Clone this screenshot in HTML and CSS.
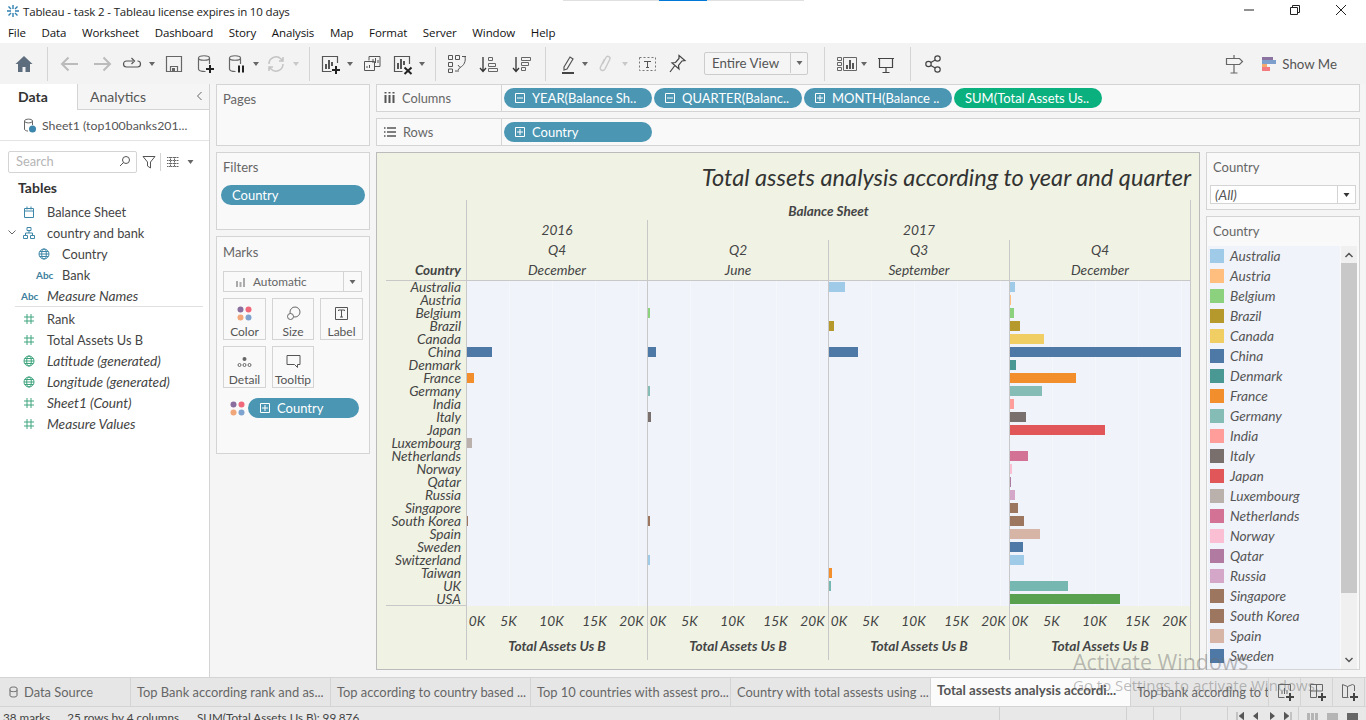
FILE: index.html
```html
<!DOCTYPE html>
<html lang="en">
<head>
  <meta charset="UTF-8" />
  <title>Tableau - task 2 - Tableau license expires in 10 days</title>
  <link rel="stylesheet" href="styles.css">
</head>
<body>
  <svg class="defs" width="0" height="0">
    <symbol id="plusbox" viewBox="0 0 10 10"><path d="M.5.5h9v9h-9zM2 5h6M5 2v6" fill="none" stroke="#fff"/></symbol>
    <symbol id="minusbox" viewBox="0 0 10 10"><path d="M.5.5h9v9h-9zM2 5h6" fill="none" stroke="#fff"/></symbol>
    <symbol id="globe" viewBox="0 0 12 12"><g fill="none" stroke="currentColor"><circle cx="6" cy="6" r="5"/><ellipse cx="6" cy="6" rx="2.3" ry="5"/><path d="M1 6h10M1.8 3.5h8.4M1.8 8.500h8.400"/></g></symbol>
    <symbol id="hash" viewBox="0 0 12 12"><path d="M4 1v10M8 1v10M1 4h10M1 8h10" fill="none" stroke="#3fa47e"/></symbol>
    <symbol id="dots" viewBox="0 0 15 15"><circle cx="3.500" cy="3.500" r="3" fill="#8a6f9e"/><circle cx="11.500" cy="3.500" r="3" fill="#f0697a"/><circle cx="3.500" cy="11.500" r="3" fill="#f2a77b"/><circle cx="11.500" cy="11.500" r="3" fill="#7fa3cf"/></symbol>
    <symbol id="drop" viewBox="0 0 6 4"><path d="M0 0h6L3 4z" fill="currentColor"/></symbol>
  </svg>

  <div class="app">
    <header class="titlebar">
      <svg class="logo" width="12" height="12" viewBox="0 0 12 12"><path d="M6 0v4M6 8v4M0 6h4M8 6h4M1.500 1.500l2.500 2.500M8 8l2.500 2.500M10.500 1.500L8 4M4 8l-2.500 2.500" stroke="#2f7fb0" stroke-width="1.400" fill="none"/></svg>
      <span class="app-title">Tableau - task 2 - Tableau license expires in 10 days</span>
      <div class="loadline"><span class="loadline-on"></span></div>
      <div class="winctl">
        <svg width="12" height="12" viewBox="0 0 12 12"><path d="M1 6h10" stroke="#222"/></svg>
        <svg width="12" height="12" viewBox="0 0 12 12"><path d="M1.500 3.500h7v7h-7zM3.500 3.500v-2h7v7h-2" fill="none" stroke="#222"/></svg>
        <svg width="12" height="12" viewBox="0 0 12 12"><path d="M1 1l10 10M11 1L1 11" stroke="#222"/></svg>
      </div>
    </header>

    <nav class="menubar">
      <span>File</span><span>Data</span><span>Worksheet</span><span>Dashboard</span><span>Story</span><span>Analysis</span><span>Map</span><span>Format</span><span>Server</span><span>Window</span><span>Help</span>
    </nav>

    <div class="toolbar">
      <svg class="tool g12" viewBox="0 0 24 24"><path d="M12 4L3.500 12H6v8h4.500v-5h3v5H18v-8h2.500z" fill="#5d6d7e"/></svg>
      <i class="tsep g11"></i>
      <svg class="tool g10" viewBox="0 0 24 24"><path d="M20 12H4M10.500 5.500L4 12l6.500 6.500" fill="none" stroke="#bbb" stroke-width="2"/></svg>
      <svg class="tool g8" viewBox="0 0 24 24"><path d="M4 12h16M13.500 5.500L20 12l-6.500 6.500" fill="none" stroke="#bbb" stroke-width="2"/></svg>
      <svg class="tool g6" viewBox="0 0 24 24"><path d="M13 9H6.500a3 3 0 0 0 0 6h11a3 3 0 0 0 0-6M11.500 6l3 3-3 3" fill="none" stroke="#555" stroke-width="1.200"/></svg>
      <svg class="tdrop g5"><use href="#drop"/></svg>
      <svg class="tool g7" viewBox="0 0 24 24"><path d="M4.500 4.500h15v15h-15zM8.500 19.500v-5h7v5" fill="none" stroke="#666" stroke-width="1.200"/><path d="M10 16h3v3h-3z" fill="#666"/></svg>
      <svg class="tool g7" viewBox="0 0 24 24"><path d="M5.500 6c0-3 11-3 11 0M5.500 6c0 3 11 3 11 0v6M5.500 6v11c0 1.500 3 2.500 7 2.500" fill="none" stroke="#666" stroke-width="1.200"/><path d="M17 13v8M13 17h8" stroke="#222" stroke-width="2"/></svg>
      <svg class="tool g7" viewBox="0 0 24 24"><path d="M5.500 6c0-3 11-3 11 0M5.500 6c0 3 11 3 11 0v6M5.500 6v11c0 1.500 3 2.500 6 2.500" fill="none" stroke="#666" stroke-width="1.200"/><path d="M15 13.500v7M19 13.500v7" stroke="#222" stroke-width="2"/></svg>
      <svg class="tdrop g5"><use href="#drop"/></svg>
      <svg class="tool g5" viewBox="0 0 24 24"><path d="M5 12a7 7 0 0 1 12-5l2 2M19 12a7 7 0 0 1-12 5l-2-2M19 5v4h-4M5 19v-4h4" fill="none" stroke="#c4c4c4" stroke-width="1.500"/></svg>
      <svg class="tdrop g5 off"><use href="#drop"/></svg>
      <i class="tsep g10"></i>
      <svg class="tool g8" viewBox="0 0 24 24"><path d="M19.500 11V4.500h-15v15h9" fill="none" stroke="#555" stroke-width="1.200"/><path d="M8 12v5M11 8v9M14 10v4" stroke="#555" stroke-width="2"/><path d="M18 14v8M14 18h8" stroke="#222" stroke-width="2"/></svg>
      <svg class="tdrop g5"><use href="#drop"/></svg>
      <svg class="tool g7" viewBox="0 0 24 24"><path d="M9 8.500V4.500h11v10h-5" fill="none" stroke="#555"/><path d="M4.500 9.500h10v9h-10z" fill="#f3f3f3" stroke="#555"/><path d="M13 11V7M15.500 11V6M18 11V8M7 16v-2M9.500 16v-3" stroke="#555"/></svg>
      <svg class="tool g6" viewBox="0 0 24 24"><path d="M19.500 12V4.500h-15v15h8" fill="none" stroke="#555" stroke-width="1.200"/><path d="M8 11v6M11 7v10M14 9v4" stroke="#555" stroke-width="2"/><path d="M14.500 15.500l7 6.500M21.500 15.500l-7 6.500" stroke="#222" stroke-width="2"/></svg>
      <svg class="tdrop g5"><use href="#drop"/></svg>
      <i class="tsep g10"></i>
      <svg class="tool g9" viewBox="0 0 24 24"><path d="M3.500 3.500h4v4h-4zM10.500 3.500h4v4h-4zM3.500 10.500h4v4h-4zM3.500 17h4v3.500h-4zM17 4.500h4M20 4.500c1 5-1 9-5 11M13 13l2 2.500-2 2.500M10 19h4" fill="none" stroke="#555"/></svg>
      <svg class="tool g8" viewBox="0 0 24 24"><path d="M6 5v14M3 16l3 3.500L9 16" fill="none" stroke="#333" stroke-width="1.300"/><path d="M11.500 5.500h4v3h-4zM11.500 11.500h7v3h-7zM11.500 16.500h9v3h-9z" fill="none" stroke="#666"/></svg>
      <svg class="tool g9" viewBox="0 0 24 24"><path d="M6 5v14M3 16l3 3.500L9 16" fill="none" stroke="#333" stroke-width="1.300"/><path d="M11.500 5.500h9v3h-9zM11.500 10.500h7v3h-7zM11.500 15.500h4v3h-4z" fill="none" stroke="#666"/></svg>
      <i class="tsep g11"></i>
      <svg class="tool g10" viewBox="0 0 24 24"><path d="M8 15l6-10 3 2-6 10-3 1z" fill="none" stroke="#555" stroke-width="1.200"/><path d="M6 21h12" stroke="#444" stroke-width="2"/></svg>
      <svg class="tdrop g2"><use href="#drop"/></svg>
      <svg class="tool g5" viewBox="0 0 24 24"><path d="M9.500 12l3.500-6.500c1.300-2.400 5-.5 3.700 2L12 17c-1.600 3-6 1-4.500-2l4-8" fill="none" stroke="#c8c8c8" stroke-width="1.400"/></svg>
      <svg class="tdrop g5 off"><use href="#drop"/></svg>
      <svg class="tool g7" viewBox="0 0 24 24"><path d="M4.500 5.500h16v13h-16z" fill="none" stroke="#777" stroke-dasharray="2 2"/><path d="M9 9.500h7M12.500 9.500v6M11 15.500h3" fill="none" stroke="#555"/></svg>
      <svg class="tool g6" viewBox="0 0 24 24"><path d="M14 3.500l6 5-3 .5-3.500 4.500.5 3.500-7-6 3.500-.5 3.500-4zM9.500 14L5 20" fill="none" stroke="#444" stroke-width="1.200"/></svg>
      <div class="fitbox g15"><span class="fit-text">Entire View</span><span class="fit-arrow"><svg width="7" height="4"><use href="#drop"/></svg></span></div>
      <i class="tsep g16"></i>
      <svg class="tool g10" viewBox="0 0 24 24"><path d="M2.500 5.500h4v3h-4zM2.500 10.500h4v3h-4zM2.500 15.500h4v3h-4zM8.500 5.500h13v13h-13z" fill="none" stroke="#666"/><path d="M12 17v-4M15 17V8M18 17v-6" stroke="#555" stroke-width="2"/></svg>
      <svg class="tdrop g2"><use href="#drop"/></svg>
      <svg class="tool g7" viewBox="0 0 24 24"><path d="M4 6.500h16M5.500 6.500v9h13v-9M12 15.500v5M8.500 20.500h7" fill="none" stroke="#444" stroke-width="1.200"/></svg>
      <i class="tsep g12"></i>
      <svg class="tool g10" viewBox="0 0 24 24"><g fill="none" stroke="#444" stroke-width="1.200"><circle cx="16.500" cy="6.500" r="2.700"/><circle cx="16.500" cy="17.500" r="2.700"/><circle cx="7.500" cy="12" r="2.700"/><path d="M9.900 10.600l4.300-2.700M9.900 13.400l4.300 2.700"/></g></svg>
      <svg class="tool signpost" viewBox="0 0 24 24"><path d="M12 3v3M4.500 6.500h13l3 3-3 3h-13zM12 12.500V21M8.500 21h7" fill="none" stroke="#666" stroke-width="1.200"/></svg>
      <div class="showme">
        <span class="sm-bars"><i class="sm1"></i><i class="sm2"></i><i class="sm3"></i><i class="sm4"></i></span>
        <span>Show Me</span>
      </div>
    </div>

    <main class="main">
      <aside class="datapane">
        <div class="dtabs">
          <div class="dtab dtab-on">Data</div>
          <div class="dtab">Analytics<svg class="dchev" width="8" height="10" viewBox="0 0 8 10"><path d="M6.500 1l-4 4 4 4" fill="none" stroke="#666"/></svg></div>
        </div>
        <div class="dsource">
          <svg width="14" height="15" viewBox="0 0 14 15"><path d="M1.500 3c0-2.500 8-2.500 8 0M1.500 3c0 2.500 8 2.500 8 0v4M1.500 3v8c0 1.300 1.500 2 3.500 2" fill="none" stroke="#666"/><circle cx="9.500" cy="11" r="3.500" fill="#3c85ad"/></svg>
          <span>Sheet1 (top100banks201...</span>
        </div>
        <div class="searchrow">
          <div class="searchbox"><span>Search</span><svg width="12" height="12" viewBox="0 0 12 12"><circle cx="7" cy="5" r="3.500" fill="none" stroke="#555"/><path d="M4.500 7.500L1 11" stroke="#555"/></svg></div>
          <svg class="filter-ic" width="14" height="14" viewBox="0 0 14 14"><path d="M1 1.500h12L8.500 7v6l-3-2V7z" fill="none" stroke="#555"/></svg>
          <i class="search-sep"></i>
          <svg class="list-ic" width="12" height="10" viewBox="0 0 12 10"><path d="M0 .5h12M0 3.500h12M0 6.500h12M0 9.500h12M3.500 0v10M7.500 0v10" stroke="#666" stroke-dasharray="1.500 .5"/></svg>
          <svg class="list-drop" width="7" height="4"><use href="#drop"/></svg>
        </div>
        <h3 class="tables">Tables</h3>
        <ul class="fields">
          <li><svg class="ficon" width="12" height="12" viewBox="0 0 12 12"><path d="M1.500 2.500h9v9h-9zM1.500 5h9M4 .5v3M8 .5v3" fill="none" stroke="#3e87a8"/></svg>Balance Sheet</li>
          <li><svg class="fexp" width="8" height="5" viewBox="0 0 8 5"><path d="M.5.500L4 4 7.500.500" fill="none" stroke="#666"/></svg><svg class="ficon" width="12" height="12" viewBox="0 0 12 12"><path d="M4 .5h4v3H4zM.5 8.500h4v3h-4zM7.500 8.500h4v3h-4zM6 3.500V6M2.500 8.500V6h7v2.500" fill="none" stroke="#3e87a8"/></svg>country and bank</li>
          <li class="child"><svg class="ficon blue" width="12" height="12"><use href="#globe"/></svg>Country</li>
          <li class="child"><span class="abc">Abc</span>Bank</li>
          <li class="it"><span class="abc">Abc</span>Measure Names</li>
          <li class="rule"></li>
          <li><svg class="ficon" width="12" height="12"><use href="#hash"/></svg>Rank</li>
          <li><svg class="ficon" width="12" height="12"><use href="#hash"/></svg>Total Assets Us B</li>
          <li class="it"><svg class="ficon green" width="12" height="12"><use href="#globe"/></svg>Latitude (generated)</li>
          <li class="it"><svg class="ficon green" width="12" height="12"><use href="#globe"/></svg>Longitude (generated)</li>
          <li class="it"><svg class="ficon" width="12" height="12"><use href="#hash"/></svg>Sheet1 (Count)</li>
          <li class="it"><svg class="ficon" width="12" height="12"><use href="#hash"/></svg>Measure Values</li>
        </ul>
      </aside>

      <section class="cards">
        <div class="card pages"><div class="card-title">Pages</div></div>
        <div class="card filters">
          <div class="card-title">Filters</div>
          <div class="pill pill-plain">Country</div>
        </div>
        <div class="card marks">
          <div class="card-title">Marks</div>
          <div class="marktype">
            <svg width="10" height="10" viewBox="0 0 10 10"><path d="M1 4v6M4.500 5v5M8 1v9" stroke="#aaa" stroke-width="2"/></svg>
            <span>Automatic</span>
            <i class="marktype-arrow"><svg width="7" height="4"><use href="#drop"/></svg></i>
          </div>
          <div class="markgrid">
            <div class="markbtn"><svg width="15" height="15"><use href="#dots"/></svg><span>Color</span></div>
            <div class="markbtn"><svg width="15" height="15" viewBox="0 0 15 15"><circle cx="9" cy="6" r="5" fill="none" stroke="#666"/><circle cx="4.500" cy="10.500" r="3" fill="#f9f9f9" stroke="#666"/></svg><span>Size</span></div>
            <div class="markbtn"><svg width="15" height="15" viewBox="0 0 15 15"><path d="M1.500 1.500h12v12h-12zM4.500 5V4h6v1M7.500 4v7M6 11h3" fill="none" stroke="#555"/></svg><span>Label</span></div>
            <div class="markbtn"><svg width="15" height="15" viewBox="0 0 15 15"><circle cx="7.500" cy="5" r="2" fill="#666"/><g fill="none" stroke="#666"><circle cx="2.500" cy="11" r="1.500"/><circle cx="7.500" cy="11" r="1.500"/><circle cx="12.500" cy="11" r="1.500"/></g></svg><span>Detail</span></div>
            <div class="markbtn"><svg width="15" height="15" viewBox="0 0 15 15"><path d="M1 1.500h13v9h-2.500v3l-3-3H1z" fill="none" stroke="#555"/></svg><span>Tooltip</span></div>
          </div>
          <div class="markpill">
            <svg width="15" height="15"><use href="#dots"/></svg>
            <div class="pill pill-mark"><svg width="10" height="10"><use href="#plusbox"/></svg>Country</div>
          </div>
        </div>
      </section>

      <section class="workspace">
        <div class="shelf">
          <div class="shelf-label"><svg width="11" height="11" viewBox="0 0 11 11"><path d="M1.500 3v8M5.500 3v8M9.500 3v8M1.500 0v1.500M5.500 0v1.500M9.500 0v1.500" stroke="#555" stroke-width="2"/></svg>Columns</div>
          <div class="shelf-pills">
            <div class="pill pill-field"><svg width="10" height="10"><use href="#minusbox"/></svg>YEAR(Balance Sh..</div>
            <div class="pill pill-field"><svg width="10" height="10"><use href="#minusbox"/></svg>QUARTER(Balanc..</div>
            <div class="pill pill-field"><svg width="10" height="10"><use href="#plusbox"/></svg>MONTH(Balance ..</div>
            <div class="pill pill-field pill-green">SUM(Total Assets Us..</div>
          </div>
        </div>
        <div class="shelf">
          <div class="shelf-label"><svg width="12" height="10" viewBox="0 0 12 10"><path d="M3 1h9M3 5h9M3 9h9M0 1h1.500M0 5h1.500M0 9h1.500" stroke="#555" stroke-width="1.600"/></svg>Rows</div>
          <div class="shelf-pills">
            <div class="pill pill-field"><svg width="10" height="10"><use href="#plusbox"/></svg>Country</div>
          </div>
        </div>

        <div class="stage">
          <div class="viz">
            <div class="viz-title">Total assets analysis according to year and quarter</div>
            <div class="chart">
              <div class="chead">
                <div class="ch ch-bold ch-line ch-balance">Balance Sheet</div>
                <div class="ch ch-line ch-2016">2016</div>
                <div class="ch ch-line ch-2017">2017</div>
                <div class="ch ch-line ch-q1">Q4</div>
                <div class="ch ch-line">Q2</div>
                <div class="ch ch-line">Q3</div>
                <div class="ch ch-line">Q4</div>
                <div class="ch ch-bold ch-country">Country</div>
                <div class="ch ch-line">December</div>
                <div class="ch ch-line">June</div>
                <div class="ch ch-line">September</div>
                <div class="ch ch-line">December</div>
              </div>

              <div class="cbody">
                <div class="rowlabels">
                  <span>Australia</span><span>Austria</span><span>Belgium</span><span>Brazil</span><span>Canada</span><span>China</span><span>Denmark</span><span>France</span><span>Germany</span><span>India</span><span>Italy</span><span>Japan</span><span>Luxembourg</span><span>Netherlands</span><span>Norway</span><span>Qatar</span><span>Russia</span><span>Singapore</span><span>South Korea</span><span>Spain</span><span>Sweden</span><span>Switzerland</span><span>Taiwan</span><span>UK</span><span>USA</span>
                </div>
                <div class="pane">
                  <i class="bar c-china" style="grid-row:6;width:25px"></i>
                  <i class="bar c-france" style="grid-row:8;width:7px"></i>
                  <i class="bar c-lux" style="grid-row:13;width:5px"></i>
                  <i class="bar c-brown" style="grid-row:19;width:1px"></i>
                </div>
                <div class="pane">
                  <i class="bar c-belgium" style="grid-row:3;width:2px"></i>
                  <i class="bar c-china" style="grid-row:6;width:8px"></i>
                  <i class="bar c-germany" style="grid-row:9;width:2px"></i>
                  <i class="bar c-italy" style="grid-row:11;width:3px"></i>
                  <i class="bar c-brown" style="grid-row:19;width:2px"></i>
                  <i class="bar c-sky" style="grid-row:22;width:2px"></i>
                </div>
                <div class="pane">
                  <i class="bar c-sky" style="grid-row:1;width:16px"></i>
                  <i class="bar c-brazil" style="grid-row:4;width:5px"></i>
                  <i class="bar c-china" style="grid-row:6;width:29px"></i>
                  <i class="bar c-france" style="grid-row:23;width:3px"></i>
                  <i class="bar c-uk" style="grid-row:24;width:2px"></i>
                </div>
                <div class="pane">
                  <i class="bar c-sky" style="grid-row:1;width:5px"></i>
                  <i class="bar c-austria" style="grid-row:2;width:1px"></i>
                  <i class="bar c-belgium" style="grid-row:3;width:4px"></i>
                  <i class="bar c-brazil" style="grid-row:4;width:10px"></i>
                  <i class="bar c-canada" style="grid-row:5;width:34px"></i>
                  <i class="bar c-china" style="grid-row:6;width:171px"></i>
                  <i class="bar c-denmark" style="grid-row:7;width:6px"></i>
                  <i class="bar c-france" style="grid-row:8;width:66px"></i>
                  <i class="bar c-germany" style="grid-row:9;width:32px"></i>
                  <i class="bar c-india" style="grid-row:10;width:4px"></i>
                  <i class="bar c-italy" style="grid-row:11;width:16px"></i>
                  <i class="bar c-japan" style="grid-row:12;width:95px"></i>
                  <i class="bar c-nether" style="grid-row:14;width:18px"></i>
                  <i class="bar c-norway" style="grid-row:15;width:2px"></i>
                  <i class="bar c-qatar" style="grid-row:16;width:1px"></i>
                  <i class="bar c-russia" style="grid-row:17;width:5px"></i>
                  <i class="bar c-brown" style="grid-row:18;width:8px"></i>
                  <i class="bar c-brown" style="grid-row:19;width:14px"></i>
                  <i class="bar c-spain" style="grid-row:20;width:30px"></i>
                  <i class="bar c-china" style="grid-row:21;width:13px"></i>
                  <i class="bar c-sky" style="grid-row:22;width:14px"></i>
                  <i class="bar c-uk" style="grid-row:24;width:58px"></i>
                  <i class="bar c-usa" style="grid-row:25;width:110px"></i>
                </div>
              </div>

              <div class="cfoot">
                <div class="axis-blank"></div>
                <div class="axis"><div class="ticks"><span>0K</span><span>5K</span><span>10K</span><span>15K</span><span>20K</span></div><b>Total Assets Us B</b></div>
                <div class="axis"><div class="ticks"><span>0K</span><span>5K</span><span>10K</span><span>15K</span><span>20K</span></div><b>Total Assets Us B</b></div>
                <div class="axis"><div class="ticks"><span>0K</span><span>5K</span><span>10K</span><span>15K</span><span>20K</span></div><b>Total Assets Us B</b></div>
                <div class="axis"><div class="ticks"><span>0K</span><span>5K</span><span>10K</span><span>15K</span><span>20K</span></div><b>Total Assets Us B</b></div>
              </div>
            </div>
          </div>

          <div class="sidecards">
            <div class="card qfilter">
              <div class="card-title">Country</div>
              <div class="qselect"><span>(All)</span><i><svg width="7" height="4"><use href="#drop"/></svg></i></div>
            </div>
            <div class="card legend">
              <div class="card-title">Country</div>
              <div class="legend-body">
                <ul class="legend-list">
                  <li><i class="c-sky"></i>Australia</li>
                  <li><i class="c-austria"></i>Austria</li>
                  <li><i class="c-belgium"></i>Belgium</li>
                  <li><i class="c-brazil"></i>Brazil</li>
                  <li><i class="c-canada"></i>Canada</li>
                  <li><i class="c-china"></i>China</li>
                  <li><i class="c-denmark"></i>Denmark</li>
                  <li><i class="c-france"></i>France</li>
                  <li><i class="c-germany"></i>Germany</li>
                  <li><i class="c-india"></i>India</li>
                  <li><i class="c-italy"></i>Italy</li>
                  <li><i class="c-japan"></i>Japan</li>
                  <li><i class="c-lux"></i>Luxembourg</li>
                  <li><i class="c-nether"></i>Netherlands</li>
                  <li><i class="c-norway"></i>Norway</li>
                  <li><i class="c-qatar"></i>Qatar</li>
                  <li><i class="c-russia"></i>Russia</li>
                  <li><i class="c-brown"></i>Singapore</li>
                  <li><i class="c-brown"></i>South Korea</li>
                  <li><i class="c-spain"></i>Spain</li>
                  <li><i class="c-china"></i>Sweden</li>
                </ul>
                <div class="scrollbar">
                  <svg width="10" height="6" viewBox="0 0 10 6"><path d="M1.500 5L5 1.500 8.500 5" fill="none" stroke="#555" stroke-width="1.500"/></svg>
                  <div class="thumb"></div>
                  <svg class="scroll-down" width="10" height="6" viewBox="0 0 10 6"><path d="M1.500 1L5 4.500 8.500 1" fill="none" stroke="#555" stroke-width="1.500"/></svg>
                </div>
              </div>
            </div>
          </div>
        </div>
      </section>
    </main>

    <div class="tabs">
      <div class="tab tab-source"><svg width="9" height="12" viewBox="0 0 9 12"><path d="M1 2.500c0-2 7-2 7 0v7c0 2-7 2-7 0zM1 4.500c0 1.500 7 1.500 7 0" fill="none" stroke="#666"/></svg>Data Source</div>
      <div class="tab">Top Bank according rank and as...</div>
      <div class="tab">Top according to country based ...</div>
      <div class="tab">Top 10 countries with assest pro...</div>
      <div class="tab">Country with total assests using ...</div>
      <div class="tab tab-on">Total assests analysis accordi...</div>
      <div class="tab tab-cut">Top bank according to to</div>
      <div class="tab-btn"><svg width="20" height="20" viewBox="0 0 20 20"><path d="M15.500 9V2.500h-12v13h6" fill="none" stroke="#666"/><path d="M7 12V9M9.500 12V6M12 12V8" stroke="#666"/><path d="M15 11v8M11 15h8" stroke="#444" stroke-width="2"/></svg></div>
      <div class="tab-btn"><svg width="20" height="20" viewBox="0 0 20 20"><path d="M15.500 9V2.500h-12v13h6M3.500 9h12M9.500 2.500v13" fill="none" stroke="#666"/><path d="M15 11v8M11 15h8" stroke="#444" stroke-width="2"/></svg></div>
      <div class="tab-btn"><svg width="20" height="20" viewBox="0 0 20 20"><path d="M3.500 2.500l5 2 5-2 2 1V9M8.500 4.500v11M3.500 2.500v13l5 0h1" fill="none" stroke="#666"/><path d="M15 11v8M11 15h8" stroke="#444" stroke-width="2"/></svg></div>
    </div>

    <footer class="status">
      <span class="st st-marks">38 marks</span>
      <span class="st st-rows">25 rows by 4 columns</span>
      <span class="st st-sum">SUM(Total Assets Us B): 99,876</span>
      <i class="st-line st-l1"></i><i class="st-line st-l2"></i><i class="st-line st-l3"></i><i class="st-line st-l4"></i><i class="st-line st-l5"></i>
      <div class="st-nav">
        <svg width="8" height="8" viewBox="0 0 8 8"><path d="M1 0v8M8 0L3 4l5 4z" fill="#555" stroke="#555" stroke-width=".5"/></svg>
        <svg width="8" height="8" viewBox="0 0 8 8"><path d="M6 0L1 4l5 4z" fill="#555"/></svg>
        <svg width="8" height="8" viewBox="0 0 8 8"><path d="M2 0l5 4-5 4z" fill="#555"/></svg>
        <svg width="8" height="8" viewBox="0 0 8 8"><path d="M7 0v8M0 0l5 4-5 4z" fill="#555" stroke="#555" stroke-width=".5"/></svg>
      </div>
      <div class="st-views">
        <span class="v-grid"></span><span class="v-mid"></span><span class="v-big"></span>
      </div>
    </footer>
  </div>

  <div class="watermark">
    <div class="wm-big">Activate Windows</div>
    <div class="wm-small">Go to Settings to activate Windows.</div>
  </div>
</body>
</html>
```

FILE: styles.css
```css
* {
  box-sizing: border-box;
}
html, body {
  margin: 0;
  height: 720px;
  overflow: hidden;
}
body {
  font-family: "Lato", "Open Sans", sans-serif;
  font-size: 12.8px;
  color: #444;
  background: #fff;
  position: relative;
}
ul {
  list-style: none;
  margin: 0;
  padding: 0;
}
.defs {
  position: absolute;
}
.app {
  width: 1366px;
  height: 720px;
  display: flex;
  flex-direction: column;
}

/* title and menu */
.titlebar {
  height: 22px;
  display: flex;
  align-items: center;
  padding-left: 7px;
  flex: none;
  position: relative;
  font-family: "Open Sans", sans-serif;
}
.logo {
  margin-right: 4px;
}
.app-title {
  font-size: 11.5px;
  color: #222;
  letter-spacing: -.15px;
}
.loadline {
  position: absolute;
  left: 563px;
  top: 0;
  width: 241px;
  height: 1px;
  background: #e0e0e0;
}
.loadline-on {
  display: block;
  margin-left: 96px;
  width: 48px;
  height: 1px;
  background: #0078d7;
}
.winctl {
  margin-left: auto;
  display: flex;
  gap: 34px;
  padding-right: 19px;
  margin-top: -2px;
}
.menubar {
  height: 21px;
  flex: none;
  display: flex;
  align-items: center;
  gap: 15.7px;
  padding-left: 8px;
  font-family: "Open Sans", sans-serif;
  font-size: 11.5px;
  letter-spacing: -.1px;
  color: #111;
}

/* toolbar */
.toolbar {
  height: 41px;
  flex: none;
  background: #f3f3f3;
  display: flex;
  align-items: center;
}
.tool {
  width: 24px;
  height: 24px;
  flex: none;
}
.tdrop {
  width: 6px;
  height: 4px;
  flex: none;
  color: #666;
}
.tdrop.off {
  color: #c8c8c8;
}
.tsep {
  width: 1px;
  height: 34px;
  background: #d4d4d4;
  flex: none;
}
.g2 { margin-left: 2px; }
.g5 { margin-left: 5px; }
.g6 { margin-left: 6px; }
.g7 { margin-left: 7px; }
.g8 { margin-left: 8px; }
.g9 { margin-left: 9px; }
.g10 { margin-left: 10px; }
.g11 { margin-left: 11px; }
.g12 { margin-left: 12px; }
.g15 { margin-left: 15px; }
.g16 { margin-left: 16px; }
.fitbox {
  width: 104px;
  height: 23px;
  border: 1px solid #ccc;
  border-radius: 2px;
  background: #f5f5f5;
  display: flex;
  align-items: center;
  font-size: 13.3px;
  color: #555;
  flex: none;
  padding-bottom: 1px;
}
.fit-text {
  padding-left: 7px;
  width: 85px;
}
.fit-arrow {
  flex: 1;
  height: 100%;
  border-left: 1px solid #ccc;
  display: flex;
  align-items: center;
  justify-content: center;
  color: #666;
}
.signpost {
  margin-left: auto;
}
.showme {
  display: flex;
  align-items: center;
  gap: 6px;
  margin-left: 16px;
  margin-right: 29px;
  font-size: 13.3px;
  color: #555;
}
.sm-bars {
  display: flex;
  flex-direction: column;
  width: 14px;
}
.sm-bars i {
  display: block;
  height: 3.500px;
}
.sm1 { width: 11px; background: #8a73a0; }
.sm2 { width: 14px; background: #7e9fcb; }
.sm3 { width: 5px; background: #f4a96e; }
.sm4 { width: 8px; background: #f57a80; }

/* main area */
.main {
  flex: 1;
  display: flex;
  background: #f5f5f5;
  min-height: 0;
}
.datapane {
  width: 210px;
  flex: none;
  background: #fff;
  border-right: 1px solid #d4d4d4;
}
.dtabs {
  display: flex;
  height: 26px;
  font-size: 14px;
}
.dtab {
  flex: 1;
  background: #f5f5f5;
  border-bottom: 1px solid #d4d4d4;
  border-left: 1px solid #d4d4d4;
  padding: 4px 0 0 12px;
  color: #555;
  position: relative;
}
.dtab-on {
  flex: none;
  width: 77px;
  background: #fff;
  border: 0;
  padding-left: 18px;
  font-weight: 700;
  color: #333;
}
.dchev {
  position: absolute;
  right: 6px;
  top: 7px;
}
.dsource {
  height: 31px;
  display: flex;
  align-items: center;
  gap: 5px;
  padding-left: 23px;
  border-bottom: 1px solid #e4e4e4;
  font-size: 12.3px;
  color: #555;
}
.searchrow {
  height: 32px;
  display: flex;
  align-items: center;
  padding: 9px 0 0 8px;
}
.searchbox {
  width: 129px;
  height: 22px;
  border: 1px solid #d4d4d4;
  border-radius: 2px;
  display: flex;
  align-items: center;
  justify-content: space-between;
  padding: 0 5px 1px 7px;
  color: #b5b5b5;
}
.filter-ic {
  margin-left: 5px;
}
.search-sep {
  width: 1px;
  height: 18px;
  background: #d4d4d4;
  margin-left: 4px;
}
.list-ic {
  margin-left: 6px;
}
.list-drop {
  margin-left: 8px;
  color: #666;
}
.tables {
  margin: 6px 0 0 18px;
  font-size: 14px;
  line-height: 18px;
  font-weight: 700;
  color: #333;
}
.fields {
  margin-top: 4px;
  color: #444;
}
.fields li {
  height: 21px;
  display: flex;
  align-items: center;
  position: relative;
  padding-left: 47px;
}
.fields li.it {
  font-style: italic;
  font-size: 13.7px;
}
.fields li.child {
  padding-left: 62px;
}
.fields li.rule {
  height: 1px;
  background: #e0e0e0;
  width: 188px;
  padding: 0;
  margin: 0 0 1px 15px;
}
.ficon {
  position: absolute;
  left: 23px;
  color: #3e87a8;
}
.fexp {
  position: absolute;
  left: 8px;
}
.child .ficon {
  left: 38px;
}
.ficon.green {
  color: #3fa47e;
}
.abc {
  position: absolute;
  left: 21px;
  font-size: 10px;
  font-weight: 700;
  font-style: normal;
  color: #3e7f9e;
}
.child .abc {
  left: 36px;
}

/* pages, filters, marks */
.cards {
  width: 154px;
  margin-left: 6px;
  flex: none;
  display: flex;
  flex-direction: column;
  gap: 6px;
}
.card {
  background: #f9f9f9;
  border: 1px solid #d4d4d4;
}
.card-title {
  padding: 6px 6px 0;
  line-height: 16px;
  font-size: 13px;
  color: #666;
}
.marks .card-title {
  padding-top: 7px;
}
.pages {
  height: 62px;
}
.filters {
  height: 78px;
}
.marks {
  height: 218px;
}
.pill {
  background: #4a96b3;
  color: #fff;
  height: 20px;
  border-radius: 10px;
  display: flex;
  align-items: center;
  font-size: 13px;
  padding-bottom: 1px;
  white-space: nowrap;
}
.pill svg {
  margin-right: 7px;
  flex: none;
}
.pill-plain {
  margin: 10px 4px 0 4px;
  padding-left: 11px;
}
.marktype {
  margin: 11px 7px 0 6px;
  height: 21px;
  border: 1px solid #d4d4d4;
  display: flex;
  align-items: center;
  padding-left: 12px;
  gap: 7px;
  font-size: 11.8px;
  color: #666;
  background: #f9f9f9;
}
.marktype-arrow {
  margin-left: auto;
  width: 18px;
  height: 100%;
  border-left: 1px solid #d4d4d4;
  display: flex;
  align-items: center;
  justify-content: center;
}
.markgrid {
  margin: 6px 0 0 6px;
  display: grid;
  grid-template-columns: 43px 42px 43px;
  grid-auto-rows: 42px;
  gap: 6px;
}
.markbtn {
  border: 1px solid #d4d4d4;
  display: flex;
  flex-direction: column;
  align-items: center;
  justify-content: flex-end;
  gap: 3px;
  font-size: 12px;
  color: #555;
}
.markpill {
  display: flex;
  align-items: center;
  margin: 10px 0 0 13px;
  gap: 3px;
}
.pill-mark {
  width: 111px;
  padding-left: 12px;
}

/* shelves */
.workspace {
  width: 984px;
  margin-left: 6px;
  flex: none;
  display: flex;
  flex-direction: column;
  gap: 6px;
}
.shelf {
  height: 28px;
  border: 1px solid #d4d4d4;
  background: #f9f9f9;
  display: flex;
}
.shelf-label {
  width: 125px;
  border-right: 1px solid #d4d4d4;
  display: flex;
  align-items: center;
  gap: 7px;
  padding: 0 0 1px 7px;
  color: #666;
  font-size: 12.8px;
}
.shelf-pills {
  display: flex;
  align-items: center;
  gap: 2px;
  padding-left: 2px;
}
.pill-field {
  width: 148px;
  padding-left: 11px;
}
.pill-green {
  background: #0bb07f;
}

/* the view */
.stage {
  display: flex;
  gap: 6px;
}
.viz {
  width: 824px;
  height: 518px;
  background: #f0f3e4;
  border: 1px solid #bbb;
}
.viz-title {
  height: 47px;
  padding: 10px 8px 0 0;
  text-align: right;
  font-size: 23.6px;
  line-height: 28px;
  font-style: italic;
  color: #333;
  white-space: nowrap;
}
.chart {
  margin-left: 9px;
  width: 805px;
  border-right: 1px solid #c8c8c8;
  font-style: italic;
  color: #444;
}
.chead {
  display: grid;
  grid-template-columns: 80px repeat(4, 181px);
  grid-auto-rows: 20px;
  border-bottom: 1px solid #c8c8c8;
  height: 81px;
}
.ch {
  display: flex;
  align-items: center;
  justify-content: center;
  font-size: 13.7px;
  padding-bottom: 1px;
}
.ch-line {
  border-left: 1px solid #c8c8c8;
}
.ch-bold {
  font-weight: 700;
  font-size: 13.5px;
}
.ch-balance {
  grid-column: 2 / 6;
  padding: 1px 0 0;
}
.ch-2016 {
  grid-column: 2;
}
.ch-2017 {
  grid-column: 3 / 6;
}
.ch-q1 {
  grid-column: 2;
}
.ch-country {
  justify-content: flex-end;
  padding-right: 5px;
}
.cbody {
  display: grid;
  grid-template-columns: 80px repeat(4, 181px);
  height: 325px;
  border-bottom: 1px solid #c8c8c8;
}
.rowlabels {
  display: flex;
  flex-direction: column;
  align-items: flex-end;
  padding-right: 5px;
  margin-top: -1px;
}
.rowlabels span {
  height: 13px;
  line-height: 13px;
  font-size: 13.7px;
  white-space: nowrap;
}
.pane {
  border-left: 1px solid #c8c8c8;
  background: repeating-linear-gradient(90deg, #f0f3fa 0 42px, #f6f7fb 42px 43px);
  display: grid;
  grid-template-rows: repeat(25, 13px);
  align-content: start;
  justify-items: start;
}
.bar {
  display: block;
  grid-column: 1;
  height: 10px;
  margin-top: 1px;
}
.cfoot {
  display: grid;
  grid-template-columns: 80px repeat(4, 181px);
  height: 54px;
}
.axis {
  border-left: 1px solid #c8c8c8;
  text-align: center;
  font-size: 13.7px;
}
.axis b {
  display: block;
  margin-top: 8px;
  line-height: 16px;
}
.ticks {
  display: grid;
  grid-template-columns: 20px 43px 43px 43px 31px;
  padding-top: 6px;
  height: 24px;
  font-size: 13.7px;
}

/* quick filter and legend */
.sidecards {
  width: 154px;
  display: flex;
  flex-direction: column;
  gap: 6px;
}
.qfilter {
  height: 58px;
}
.qselect {
  margin: 10px 3px 0;
  height: 19px;
  background: #fff;
  border: 1px solid #d4d4d4;
  display: flex;
  align-items: center;
  font-style: italic;
  font-size: 13.7px;
  color: #555;
  padding-left: 4px;
}
.qselect i {
  margin-left: auto;
  width: 18px;
  height: 100%;
  border-left: 1px solid #d4d4d4;
  display: flex;
  align-items: center;
  justify-content: center;
  color: #333;
}
.legend {
  height: 454px;
  display: flex;
  flex-direction: column;
  overflow: hidden;
}
.legend-body {
  margin-top: 7px;
  flex: 1;
  display: flex;
  min-height: 0;
  margin-left: 1px;
}
.legend-list {
  width: 132px;
  background: #f0f3fa;
  padding: 0 0 0 2px;
  overflow: hidden;
  font-style: italic;
  font-size: 13.7px;
  color: #555;
}
.legend-list li {
  height: 20px;
  display: flex;
  align-items: center;
  gap: 6px;
  padding-bottom: 1px;
}
.legend-list i {
  width: 14px;
  height: 14px;
  flex: none;
}
.scrollbar {
  width: 16px;
  margin-left: 1px;
  background: #f0f0f0;
  display: flex;
  flex-direction: column;
  align-items: center;
  position: relative;
}
.scrollbar svg {
  margin-top: 6px;
}
.thumb {
  margin-top: 5px;
  width: 16px;
  height: 330px;
  background: #c8c8c8;
}
.scrollbar .scroll-down {
  margin-top: auto;
  margin-bottom: 6px;
}

/* tabs and status */
.tabs {
  height: 30px;
  flex: none;
  display: flex;
  background: #e6e6e6;
  border-top: 1px solid #d4d4d4;
  border-bottom: 1px solid #d4d4d4;
  font-size: 12.9px;
  color: #666;
}
.tab {
  width: 200px;
  padding: 6px 0 0 6px;
  border-right: 1px solid #d4d4d4;
  white-space: nowrap;
  overflow: hidden;
}
.tab-source {
  width: 131px;
  display: flex;
  gap: 6px;
  padding-left: 9px;
  align-items: flex-start;
}
.tab-source svg {
  margin-top: 2px;
}
.tab-on {
  background: #fbfbfb;
  font-weight: 700;
  font-size: 13.3px;
  color: #555;
  padding-top: 4px;
}
.tab-cut {
  width: 138px;
}
.tab-btn {
  width: 32px;
  flex: none;
  border-right: 1px solid #d4d4d4;
  display: flex;
  align-items: center;
  justify-content: center;
}
.status {
  height: 13px;
  flex: none;
  background: #e8e8e8;
  position: relative;
  overflow: hidden;
  display: flex;
  font-size: 11.7px;
  color: #444;
  line-height: 15px;
  padding-top: 3px;
}
.st-marks { margin-left: 3px; }
.st-rows { margin-left: 17px; }
.st-sum { margin-left: 18px; }
.st-line {
  position: absolute;
  top: 0;
  width: 1px;
  height: 13px;
  background: #d0d0d0;
}
.st-l1 { left: 999px; }
.st-l2 { left: 1126px; }
.st-l3 { left: 1153px; }
.st-l4 { left: 1180px; }
.st-l5 { left: 1227px; }
.st-nav {
  position: absolute;
  left: 1236px;
  top: 5px;
  display: flex;
  gap: 8px;
}
.st-views {
  position: absolute;
  left: 1298px;
  top: 0;
  height: 13px;
  width: 68px;
  border-left: 1px solid #d0d0d0;
  display: flex;
  align-items: flex-end;
}
.v-grid {
  margin-left: 8px;
  width: 11px;
  height: 7px;
  background: repeating-linear-gradient(90deg, #b5b5b5 0 3px, #e8e8e8 3px 4px);
}
.v-mid {
  margin-left: 9px;
  width: 11px;
  height: 7px;
  background: #b5b5b5;
}
.v-big {
  margin-left: 9px;
  width: 11px;
  height: 7px;
  background: #666;
}

/* windows watermark sits on top of everything */
.watermark {
  position: absolute;
  left: 1073px;
  top: 649px;
  font-family: "Open Sans", sans-serif;
  color: rgba(110, 110, 110, .45);
  white-space: nowrap;
  pointer-events: none;
}
.wm-big {
  font-size: 21.4px;
  line-height: 26px;
}
.wm-small {
  font-size: 15px;
  line-height: 20px;
}

/* country colours */
.c-sky { background: #a0cbe8; }
.c-austria { background: #ffbe7d; }
.c-belgium { background: #8cd17d; }
.c-brazil { background: #b6992d; }
.c-canada { background: #f1ce63; }
.c-china { background: #4e79a7; }
.c-denmark { background: #499894; }
.c-france { background: #f28e2b; }
.c-germany { background: #86bcb6; }
.c-india { background: #ff9d9a; }
.c-italy { background: #79706e; }
.c-japan { background: #e15759; }
.c-lux { background: #bab0ac; }
.c-nether { background: #d37295; }
.c-norway { background: #fabfd2; }
.c-qatar { background: #b07aa1; }
.c-russia { background: #d4a6c8; }
.c-brown { background: #9d7660; }
.c-spain { background: #d7b5a6; }
.c-uk { background: #76b7b2; }
.c-usa { background: #59a14f; }
```
